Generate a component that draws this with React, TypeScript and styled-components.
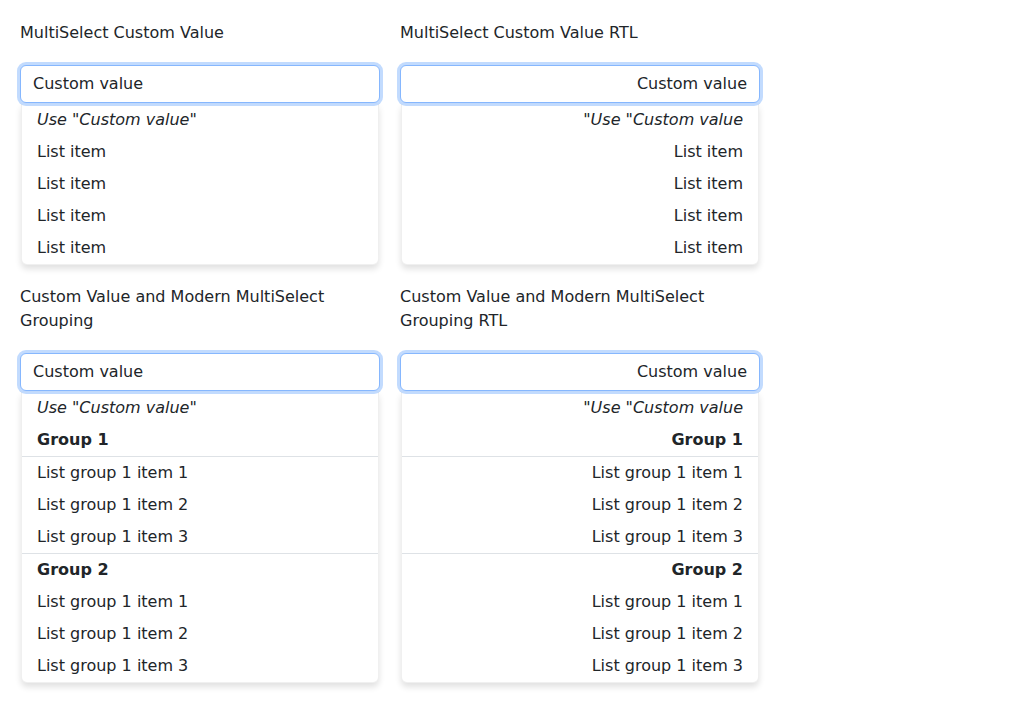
import React from "react";
import styled, { createGlobalStyle } from "styled-components";

const Global = createGlobalStyle`
  html, body { margin: 0; padding: 0; background: #fff; }
  body {
    font-family: "DejaVu Sans", "Liberation Sans", sans-serif;
    font-size: 16px;
    line-height: 24px;
    color: #212529;
  }
`;

const Page = styled.div`
  display: grid;
  grid-template-columns: 360px 360px;
  column-gap: 20px;
  row-gap: 20px;
  padding: 21px 20px 20px;
  align-items: start;
`;

const Demo = styled.div`
  display: flex;
  flex-direction: column;
`;

const Label = styled.div`
  font-size: 16px;
  line-height: 24px;
  color: #212529;
  margin-bottom: 20px;
  direction: ltr;
`;

const Input = styled.div<{ $rtl?: boolean }>`
  box-sizing: border-box;
  height: 38px;
  padding: 6px 12px;
  border: 1px solid #86b7fe;
  border-radius: 6px;
  box-shadow: 0 0 0 3px rgba(13, 110, 253, 0.25);
  background: #fff;
  text-align: ${(p) => (p.$rtl ? "right" : "left")};
  direction: ${(p) => (p.$rtl ? "rtl" : "ltr")};
  position: relative;
  z-index: 1;
`;

const Popup = styled.div<{ $rtl?: boolean }>`
  margin: 1px 1px 0;
  background: #fff;
  border: 1px solid rgba(0, 0, 0, 0.06);
  border-top: none;
  border-radius: 0 0 6px 6px;
  box-shadow: 0 4px 6px rgba(0, 0, 0, 0.12);
  direction: ${(p) => (p.$rtl ? "rtl" : "ltr")};
  overflow: hidden;
`;

const Item = styled.div<{ $italic?: boolean }>`
  padding: 4px 15px;
  line-height: 24px;
  font-style: ${(p) => (p.$italic ? "italic" : "normal")};
  white-space: nowrap;
`;

const GroupHeader = styled.div<{ $edge: "top" | "bottom" }>`
  padding: 4px 15px;
  line-height: 24px;
  font-weight: bold;
  ${(p) =>
    p.$edge === "bottom"
      ? "border-bottom: 1px solid #dee2e6;"
      : "border-top: 1px solid #dee2e6;"}
`;

const SimpleList: React.FC<{ rtl?: boolean }> = ({ rtl }) => (
  <Popup $rtl={rtl}>
    <Item $italic>Use "Custom value"</Item>
    <Item>List item</Item>
    <Item>List item</Item>
    <Item>List item</Item>
    <Item>List item</Item>
  </Popup>
);

const GroupedList: React.FC<{ rtl?: boolean }> = ({ rtl }) => (
  <Popup $rtl={rtl}>
    <Item $italic>Use "Custom value"</Item>
    <GroupHeader $edge="bottom">Group 1</GroupHeader>
    <Item>List group 1 item 1</Item>
    <Item>List group 1 item 2</Item>
    <Item>List group 1 item 3</Item>
    <GroupHeader $edge="top">Group 2</GroupHeader>
    <Item>List group 1 item 1</Item>
    <Item>List group 1 item 2</Item>
    <Item>List group 1 item 3</Item>
  </Popup>
);

export default function App() {
  return (
    <>
      <Global />
      <Page>
        <Demo>
          <Label>MultiSelect Custom Value</Label>
          <Input>Custom value</Input>
          <SimpleList />
        </Demo>
        <Demo>
          <Label>MultiSelect Custom Value RTL</Label>
          <Input $rtl>Custom value</Input>
          <SimpleList rtl />
        </Demo>
        <Demo>
          <Label>Custom Value and Modern MultiSelect Grouping</Label>
          <Input>Custom value</Input>
          <GroupedList />
        </Demo>
        <Demo>
          <Label>Custom Value and Modern MultiSelect Grouping RTL</Label>
          <Input $rtl>Custom value</Input>
          <GroupedList rtl />
        </Demo>
      </Page>
    </>
  );
}
